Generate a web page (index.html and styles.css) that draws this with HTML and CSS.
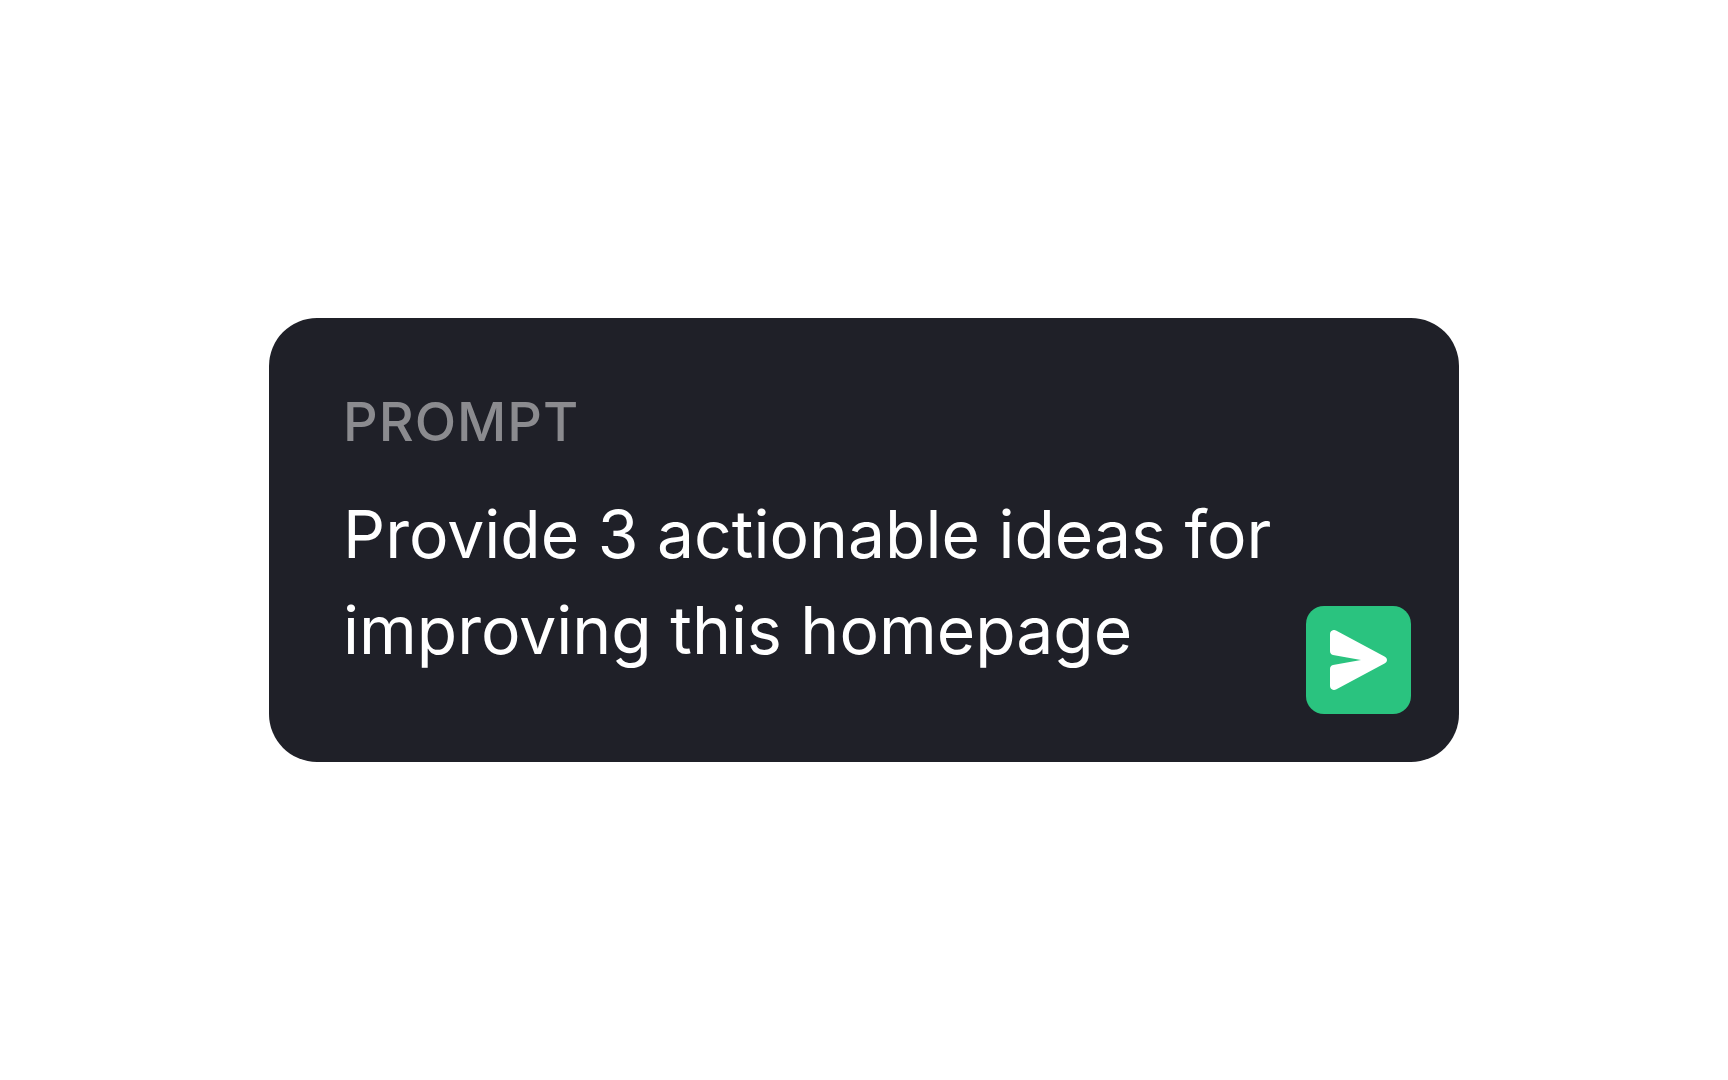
FILE: index.html
```html
<!DOCTYPE html>
<html lang="en">
<head>
<meta charset="utf-8">
<meta name="viewport" content="width=device-width, initial-scale=1">
<title>Prompt</title>
<link rel="stylesheet" href="styles.css">
</head>
<body>
<main class="page">
  <form class="card">
    <div class="field">
      <label class="label" for="prompt">PROMPT</label>
      <textarea class="prompt" id="prompt" rows="2">Provide 3 actionable ideas for improving this homepage</textarea>
    </div>
    <button class="send" type="button" aria-label="Send">
      <svg class="icon" viewBox="0 0 57 60" aria-hidden="true"><path d="M0 4C0 1 3 -1 6 .5L54.500 26.500C57.800 28.300 57.800 31.700 54.500 33.500L6 59.500C3 61 0 59 0 56V39C0 37 1 35.500 3 35L31 30L3 25C1 24.500 0 23 0 21Z"/></svg>
    </button>
  </form>
</main>
</body>
</html>
```
FILE: styles.css
```css
* { box-sizing: border-box; }
body { margin: 0; background: #fff; font-family: "Inter", sans-serif; }
.page { display: flex; align-items: center; justify-content: center; min-height: 100vh; padding: 24px; }
.card { display: flex; align-items: flex-end; gap: 16px; width: 100%; max-width: 1190px; padding: 68px 48px 48px 74px; border-radius: 48px; background: #1f2028; }
.field { display: flex; flex: 1; flex-direction: column; gap: 28px; min-width: 0; padding-bottom: 36px; }
.label { color: #8b8b8f; font-size: 54px; font-weight: 500; line-height: 72px; letter-spacing: 1px; }
.prompt { display: block; width: 100%; height: 192px; padding: 0; border: 0; outline: 0; resize: none; overflow: hidden; background: transparent; color: #fff; font-family: inherit; font-size: 66px; line-height: 96px; }
.send { display: flex; align-items: center; justify-content: center; flex: none; width: 105px; height: 108px; padding: 0; border: 0; border-radius: 18px; background: #2ac37f; }
.icon { width: 57px; height: 60px; fill: #fff; }
```
